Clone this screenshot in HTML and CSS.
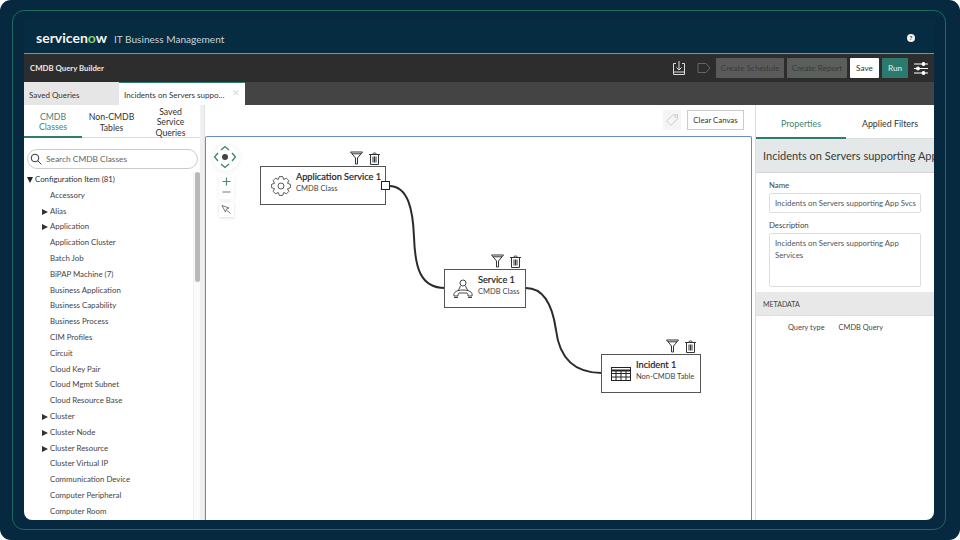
FILE: index.html
```html
<!DOCTYPE html>
<html lang="en">
<head>
<meta charset="utf-8">
<title>CMDB Query Builder</title>
<link rel="stylesheet" href="styles.css">
</head>
<body>
<div class="frame">
<div class="app">
  <header class="brandbar">
    <div class="brand"><span class="logo">servicen<span class="logo-o">o</span>w</span><span class="product">IT Business Management</span></div>
    <span class="help">?</span>
  </header>
  <div class="titlebar">
    <span class="title">CMDB Query Builder</span>
    <div class="actions">
      <svg class="act-icon" width="14" height="16" viewBox="0 0 14 16" fill="none" stroke="#ddd" stroke-width="1"><path d="M4 3.500H1.500v11h11v-11H10M7 1v9M4.500 7.500 7 10l2.500-2.500M1.500 12h11"/></svg>
      <svg class="act-icon tag" width="14" height="12" viewBox="0 0 14 12" fill="none" stroke="#666" stroke-width="1"><path d="M1 1.500h8l4 4.500-4 4.500H1z"/></svg>
      <span class="btn off wide">Create Schedule</span>
      <span class="btn off report">Create Report</span>
      <span class="btn save">Save</span>
      <span class="btn run">Run</span>
      <svg width="14" height="13" viewBox="0 0 14 13" stroke="#fff" stroke-width="1.200" fill="#fff"><path d="M0 2h14M0 6.500h14M0 11h14"/><circle cx="9.500" cy="2" r="1.300"/><circle cx="4" cy="6.500" r="1.300"/><circle cx="9.500" cy="11" r="1.300"/></svg>
    </div>
  </div>
  <div class="tabbar">
    <span class="tab saved">Saved Queries</span>
    <span class="tab active"><span class="tab-text">Incidents on Servers suppo…</span><span class="close">✕</span></span>
  </div>
  <div class="main">
    <aside class="left">
      <div class="lefttabs">
        <span class="ltab on">CMDB<br>Classes</span>
        <span class="ltab">Non-CMDB<br>Tables</span>
        <span class="ltab">Saved<br>Service<br>Queries</span>
      </div>
      <div class="search">
        <svg width="12" height="12" viewBox="0 0 12 12" fill="none" stroke="#333" stroke-width="1"><circle cx="5" cy="5" r="3.800"/><path d="m7.800 7.800 3.500 3.500"/></svg>
        <span>Search CMDB Classes</span>
      </div>
      <div class="treewrap">
        <ul class="tree">
          <li class="root"><span class="down"></span>Configuration Item (81)</li>
          <li>Accessory</li>
          <li class="arrow">Alias</li>
          <li class="arrow">Application</li>
          <li>Application Cluster</li>
          <li>Batch Job</li>
          <li>BiPAP Machine (7)</li>
          <li>Business Application</li>
          <li>Business Capability</li>
          <li>Business Process</li>
          <li>CIM Profiles</li>
          <li>Circuit</li>
          <li>Cloud Key Pair</li>
          <li>Cloud Mgmt Subnet</li>
          <li>Cloud Resource Base</li>
          <li class="arrow">Cluster</li>
          <li class="arrow">Cluster Node</li>
          <li class="arrow">Cluster Resource</li>
          <li>Cluster Virtual IP</li>
          <li>Communication Device</li>
          <li>Computer Peripheral</li>
          <li>Computer Room</li>
        </ul>
        <div class="scrolltrack"><div class="thumb"></div></div>
      </div>
    </aside>
    <div class="divider"></div>
    <section class="center">
      <div class="canvasbar">
        <span class="tagbtn"><svg width="14" height="14" viewBox="0 0 14 14" fill="none" stroke="#ccc" stroke-width="1"><path d="M1.500 8 8 1.800l4.500-.3-.2 4.500-6.300 6.500z"/><circle cx="10.300" cy="3.700" r=".8"/></svg></span>
        <span class="clear">Clear Canvas</span>
      </div>
      <div class="canvas">
        <svg class="wires" width="546" height="384" viewBox="0 0 546 384" fill="none" stroke="#2b2b2b" stroke-width="2"><path d="M183 49C203 49 207 75 208 100C209 130 214 151 239 151"/><path d="M320 151C340 151 347 172 350 193C353 218 366 236 396 236"/></svg>
        <div class="nav">
          <div class="pad">
            <svg width="24" height="24" viewBox="0 0 24 24" fill="none" stroke="#3e7f74" stroke-width="1.300"><path d="m8 5 4-3.500L16 5M8 19l4 3.500 4-3.500M5 8l-3.500 4L5 16M19 8l3.500 4-3.500 4"/><circle cx="12" cy="12" r="3" fill="#444" stroke="none"/></svg>
          </div>
          <div class="zoom">
            <svg width="9" height="20" viewBox="0 0 9 20" fill="none" stroke-width="1.200"><path d="M.5 4.500h8M4.500.5v8" stroke="#4f8a7f"/><path d="M.5 15h8" stroke="#777"/></svg>
          </div>
          <div class="pointer"><svg width="11" height="11" viewBox="0 0 11 11" fill="none" stroke="#555" stroke-width=".8"><path d="m1 1.500 7 2.500-2.500 1-1 3zM6 6.500l3.500 3"/></svg></div>
        </div>
        <article class="node n1">
          <div class="tools"><svg class="funnel" width="13" height="14" viewBox="0 0 13 14" fill="none" stroke="#333" stroke-width="1"><path d="M.5 1h12L7.500 7v6h-2V7zM2 2.800h9"/></svg><svg class="bin" width="11" height="13" viewBox="0 0 11 13" fill="none" stroke="#333" stroke-width="1"><path d="M0 2.500h11M3.500 2.500c0-2 4-2 4 0M1.500 2.500v10h8v-10M4 4.500v6M5.500 4.500v6M7 4.500v6"/></svg></div>
          <svg class="nicon" width="20" height="20" viewBox="0 0 20 20" fill="none" stroke="#333" stroke-width=".8" stroke-linejoin="round"><path d="M8.300.6h3.400l1 2.900 2.750-1.300 2.350 2.350-1.300 2.750 2.900 1v3.400l-2.900 1 1.300 2.750-2.350 2.350-2.750-1.300-1 2.900H8.300l-1-2.900-2.750 1.300-2.350-2.350 1.300-2.750-2.900-1V8.300l2.900-1-1.300-2.750L4.550 2.200l2.750 1.300z"/><circle cx="10" cy="10" r="3"/></svg>
          <div class="ntext"><b>Application Service 1</b><span>CMDB Class</span></div>
          <span class="port"></span>
        </article>
        <article class="node n2">
          <div class="tools"><svg class="funnel" width="13" height="14" viewBox="0 0 13 14" fill="none" stroke="#333" stroke-width="1"><path d="M.5 1h12L7.500 7v6h-2V7zM2 2.800h9"/></svg><svg class="bin" width="11" height="13" viewBox="0 0 11 13" fill="none" stroke="#333" stroke-width="1"><path d="M0 2.500h11M3.500 2.500c0-2 4-2 4 0M1.500 2.500v10h8v-10M4 4.500v6M5.500 4.500v6M7 4.500v6"/></svg></div>
          <svg class="nicon" width="20" height="20" viewBox="0 0 20 20" fill="none" stroke="#333" stroke-width=".9"><circle cx="10" cy="4" r="3"/><path d="M7.500 7 5 12M12.500 7l2.500 5M1 17c-1-4 3-6 9-6s10 2 9 6h-4c0-1.500 0-2.500-1-3H6c-1 .5-1 1.500-1 3zM1 18.500h4M15 18.500h4"/></svg>
          <div class="ntext"><b>Service 1</b><span>CMDB Class</span></div>
        </article>
        <article class="node n3">
          <div class="tools"><svg class="funnel" width="13" height="14" viewBox="0 0 13 14" fill="none" stroke="#333" stroke-width="1"><path d="M.5 1h12L7.500 7v6h-2V7zM2 2.800h9"/></svg><svg class="bin" width="11" height="13" viewBox="0 0 11 13" fill="none" stroke="#333" stroke-width="1"><path d="M0 2.500h11M3.500 2.500c0-2 4-2 4 0M1.500 2.500v10h8v-10M4 4.500v6M5.500 4.500v6M7 4.500v6"/></svg></div>
          <svg class="nicon" width="20" height="14" viewBox="0 0 20 14" fill="none" stroke="#222" stroke-width="1"><rect x=".5" y=".5" width="19" height="13"/><path d="M.5 3.500h19" stroke-width="2"/><path d="M.5 6.500h19M.5 10h19M5 4v10M10 4v10M15 4v10"/></svg>
          <div class="ntext"><b>Incident 1</b><span>Non-CMDB Table</span></div>
        </article>
      </div>
    </section>
    <aside class="right">
      <div class="righttabs"><span class="rtab on">Properties</span><span class="rtab">Applied Filters</span></div>
      <div class="rtitle">Incidents on Servers supporting App Svcs</div>
      <div class="form">
        <label>Name</label>
        <div class="input">Incidents on Servers supporting App Svcs</div>
        <label>Description</label>
        <div class="input area">Incidents on Servers supporting App Services</div>
      </div>
      <div class="meta">METADATA</div>
      <div class="metarow"><span class="mk">Query type</span><span class="mv">CMDB Query</span></div>
    </aside>
  </div>
</div>
</div>
</body>
</html>
```
FILE: styles.css
```css
* { box-sizing: border-box; }
html { margin: 0; height: 100%; background: #fff; }
body {
  margin: 0;
  width: 960px; height: 540px; overflow: hidden;
  background: #06293f;
  border-radius: 11px;
  font-family: "Lato", "Noto Sans", sans-serif;
  color: #333;
  padding: 10px 14px 10px 12px;
}
.frame {
  height: 520px;
  border: 1px solid #1c6b5c;
  border-radius: 12px;
  padding: 10px 11px 9px 11px;
}
.app {
  height: 100%;
  display: flex; flex-direction: column;
  border-radius: 0 0 8px 8px;
  overflow: hidden;
  background: #fff;
}
.brandbar {
  height: 33px; flex: none;
  background: #062c42;
  border-bottom: 1px solid #57b05a;
  display: flex; align-items: center; justify-content: space-between;
  padding: 2px 19px 0 12px;
}
.brand { display: flex; align-items: baseline; gap: 7px; color: #dfe7ea; }
.logo { font: bold 14px/1 "Lato", sans-serif; color: #f2f5f6; }
.logo-o { color: #7fd068; }
.product { font-size: 10.100px; line-height: 1; color: #c9d3d8; }
.help {
  width: 8px; height: 8px; border-radius: 50%; background: #f3f3f3; color: #133;
  font-size: 6px; line-height: 8px; text-align: center; font-weight: bold;
}
.titlebar {
  height: 28px; flex: none; background: #2e2d2d;
  display: flex; align-items: center; justify-content: space-between;
  padding: 0 6px 0 6px;
}
.title { color: #e9e9e9; font-size: 7.800px; font-weight: 700; }
.actions { display: flex; align-items: center; gap: 3px; }
.act-icon { margin-right: 8px; }
.act-icon.tag { margin-right: 2px; }
.btn {
  height: 20px; font-size: 8.200px; line-height: 20px; text-align: center; border-radius: 1px;
  white-space: nowrap;
}
.off { background: #5a5a5a; color: #3a3a3a; }
.wide { width: 68px; }
.report { width: 60px; background: #5a5f5b; }
.save { width: 29px; background: #fff; color: #333; }
.run { width: 26px; background: #2c7a6d; color: #e7f3f0; margin-right: 3px; }
.tabbar { height: 23px; flex: none; background: #444; display: flex; }
.tab { font-size: 8px; line-height: 27px; display: flex; height: 23px; white-space: nowrap; }
.saved { width: 95px; background: #e6e6e6; padding-left: 5px; }
.active {
  width: 126px; background: #fff; border-top: 1px solid #2f7d6e; padding-left: 5px;
  justify-content: space-between; line-height: 25px;
}
.close { color: #d8d8d8; font-size: 9px; line-height: 20px; margin-right: 5px; }
.main { flex: 1; display: flex; min-height: 0; }
.left { width: 176px; flex: none; display: flex; flex-direction: column; min-height: 0; }
.lefttabs { height: 33px; flex: none; display: flex; border-bottom: 1px solid #ddd; }
.ltab {
  font-size: 8.700px; line-height: 10.300px; text-align: center; display: flex; align-items: center; justify-content: center;
  flex: 1; color: #333; padding-top: 3px;
}
.ltab.on { flex: none; width: 58px; color: #3e8576; border-bottom: 2px solid #2f7d6e; margin-bottom: -1px; }
.search {
  margin: 11px 0 0 3px; width: 171px; height: 20px; flex: none;
  border: 1px solid #ccc; border-radius: 10px;
  display: flex; align-items: center; gap: 4px; padding-left: 2px;
  font-size: 8.400px; color: #666;
}
.treewrap { flex: 1; display: flex; min-height: 0; margin-top: 3px; overflow: hidden; }
.tree {
  list-style: none; margin: 0; padding: 0 0 0 26px; flex: 1; min-width: 0;
  font-size: 7.850px; line-height: 15.800px; color: #444;
}
.tree li { position: relative; white-space: nowrap; }
.root { margin-left: -23px; padding-left: 8px; color: #333; }
.down {
  position: absolute; left: 0; top: 5px; width: 0; height: 0;
  border: 3.500px solid transparent; border-top: 6px solid #222; border-bottom: 0;
}
.arrow::before {
  content: ""; position: absolute; left: -8px; top: 5px; width: 0; height: 0;
  border: 3px solid transparent; border-left: 6px solid #333; border-right: 0;
}
.scrolltrack { width: 7px; flex: none; background: #fafafa; border-left: 1px solid #f2f2f2; }
.thumb { width: 5px; height: 110px; margin-left: 1px; background: #b9b9b9; border-radius: 3px; }
.divider { width: 5px; flex: none; background: #f0f0f2; border-right: 1px solid #e2e2e4; }
.center { width: 550px; flex: none; display: flex; flex-direction: column; min-height: 0; }
.canvasbar { height: 31px; flex: none; display: flex; align-items: center; justify-content: flex-end; gap: 6px; padding: 0 11px 2px 0; }
.tagbtn { width: 18px; height: 20px; background: #f5f5f5; display: flex; align-items: center; justify-content: center; }
.clear { width: 57px; height: 20px; border: 1px solid #ccc; font-size: 7.800px; line-height: 18px; text-align: center; }
.canvas { position: relative; width: 547px; flex: 1; border: 1px solid #6b8dbb; border-bottom: 0; border-radius: 2px 2px 0 0; background: #fff; overflow: hidden; }
.wires { position: absolute; left: 0; top: 0; }
.nav {
  position: absolute; left: 8px; top: 8px; width: 24px; display: flex; flex-direction: column; align-items: center;
}
.pad { height: 26px; width: 26px; flex: none; border-radius: 50%; box-shadow: 0 0 5px #e8e8e8; }
.zoom { display: flex; justify-content: center; margin-top: 4px; width: 15px; padding: 2px 0; box-shadow: 0 1px 4px #eee; }
.pointer { margin-top: 3px; width: 15px; height: 15px; display: flex; align-items: center; justify-content: center; box-shadow: 0 1px 3px #ddd; }
.node {
  position: absolute; background: #fff; border: 1px solid #555;
  display: flex; align-items: center; height: 39px;
}
.n1 { left: 54px; top: 29px; width: 126px; padding-left: 10px; }
.n2 { left: 238px; top: 132px; width: 82px; padding-left: 8px; }
.n3 { left: 395px; top: 217px; width: 100px; padding-left: 9px; }
.tools { position: absolute; right: 5px; top: -16px; display: flex; gap: 6px; align-items: flex-end; }
.n2 .tools, .n3 .tools { right: 4px; }
.nicon { flex: none; margin-right: 5px; }
.ntext { display: flex; flex-direction: column; line-height: 12px; white-space: nowrap; margin-top: -5px; }
.ntext b { font-size: 9.200px; font-weight: 400; color: #1f1f1f; -webkit-text-stroke: .2px #1f1f1f; }
.ntext span { font-size: 7.500px; color: #444; }
.port { position: absolute; right: -5px; top: 14px; width: 9px; height: 9px; background: #fff; border: 1px solid #222; }
.right { flex: 1; min-width: 0; display: flex; flex-direction: column; overflow: hidden; border-left: 1px solid #ddd; }
.righttabs { height: 34px; flex: none; display: flex; border-bottom: 1px solid #ddd; }
.rtab { font-size: 8.900px; line-height: 37px; text-align: center; flex: 1; white-space: nowrap; }
.rtab.on { flex: none; width: 90px; color: #3e8576; border-bottom: 2px solid #2f7d6e; height: 34px; }
.rtitle {
  height: 34px; flex: none; background: #e5e8e8; border-bottom: 1px solid #d5d5d5;
  font-size: 11px; line-height: 33px; padding-left: 7px; white-space: nowrap; overflow: hidden; color: #3a3a3a;
}
.form { height: 119px; flex: none; padding: 7px 13px 0 13px; }
.form label { display: block; font-size: 7.800px; line-height: 11px; color: #444; }
.input { height: 20px; margin: 2px 0 7px; border: 1px solid #ddd; border-radius: 2px; font-size: 7.800px; line-height: 18px; padding: 0 5px; white-space: nowrap; overflow: hidden; color: #555; }
.input.area { height: 54px; margin: 2px 0 0; white-space: normal; line-height: 12px; padding-top: 3px; }
.meta { height: 24px; flex: none; background: #e8e8e8; border-bottom: 1px solid #ddd; font-size: 7px; line-height: 25px; padding-left: 7px; color: #444; }
.metarow { display: flex; font-size: 7.400px; line-height: 11px; padding: 6px 0 0 32px; gap: 14px; color: #444; }
```
